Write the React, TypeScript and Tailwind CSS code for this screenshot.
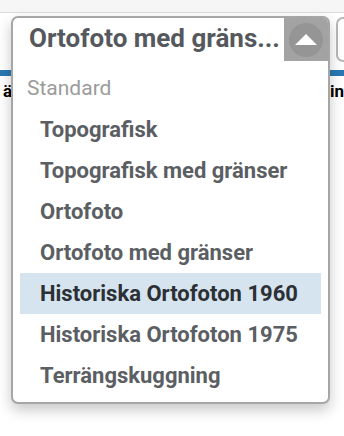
import React from "react";

const items = [
  "Topografisk",
  "Topografisk med gränser",
  "Ortofoto",
  "Ortofoto med gränser",
  "Historiska Ortofoton 1960",
  "Historiska Ortofoton 1975",
  "Terrängskuggning",
];

export default function App() {
  return (
    <div className="relative w-[344px] h-[436px] overflow-hidden bg-white" style={{ fontFamily: "Roboto, 'Liberation Sans', sans-serif" }}>
      {/* background page */}
      <div className="h-[13px] bg-[#f6f6f6] border-b border-[#dcdcdc]" />
      <div className="h-[57px] flex items-start justify-end">
        <div className="mt-[4px] mr-[-14px] w-[22px] h-[45px] rounded-[7px] border-2 border-[#b8b8b8] bg-white" />
      </div>
      <div className="h-[6px] bg-[#2a78b2]" />
      <div className="flex justify-between items-center h-[22px] mt-[4px] text-[17px] font-bold text-black leading-none">
        <span className="ml-[3px]">ä</span>
        <span className="mr-[0px]">in</span>
      </div>

      {/* open dropdown */}
      <div className="absolute left-[11px] top-[16px] w-[319px] h-[388px] rounded-[7px] border-2 border-[#a6a6a6] bg-white shadow-[0_6px_14px_rgba(0,0,0,0.22)] overflow-hidden">
        <div className="flex h-[43px]">
          <div className="flex-1 flex items-center pl-[16px] pb-[3px] text-[26px] font-bold text-[#55585c] whitespace-nowrap">
            Ortofoto med gräns...
          </div>
          <div className="w-[44px] h-[43px] bg-[#a3a3a3] flex items-center justify-center">
            <div className="w-[34px] h-[34px] rounded-full bg-[#959595] flex items-center justify-center">
              <svg width="22" height="11" viewBox="0 0 22 11">
                <polygon points="11,0 22,11 0,11" fill="#ffffff" />
              </svg>
            </div>
          </div>
        </div>
        <div className="px-[7px] pt-[7px]">
          <div className="h-[41px] flex items-center pl-[7px] text-[21px] text-[#9b9b9b]">Standard</div>
          {items.map((t, i) => (
            <div
              key={t}
              className={
                i === 4
                  ? "h-[41px] flex items-center pl-[20px] text-[22px] font-bold text-[#2c3035] bg-[#d5e4ee]"
                  : "h-[41px] flex items-center pl-[20px] text-[22px] font-bold text-[#5b5e63]"
              }
            >
              {t}
            </div>
          ))}
        </div>
      </div>
    </div>
  );
}
